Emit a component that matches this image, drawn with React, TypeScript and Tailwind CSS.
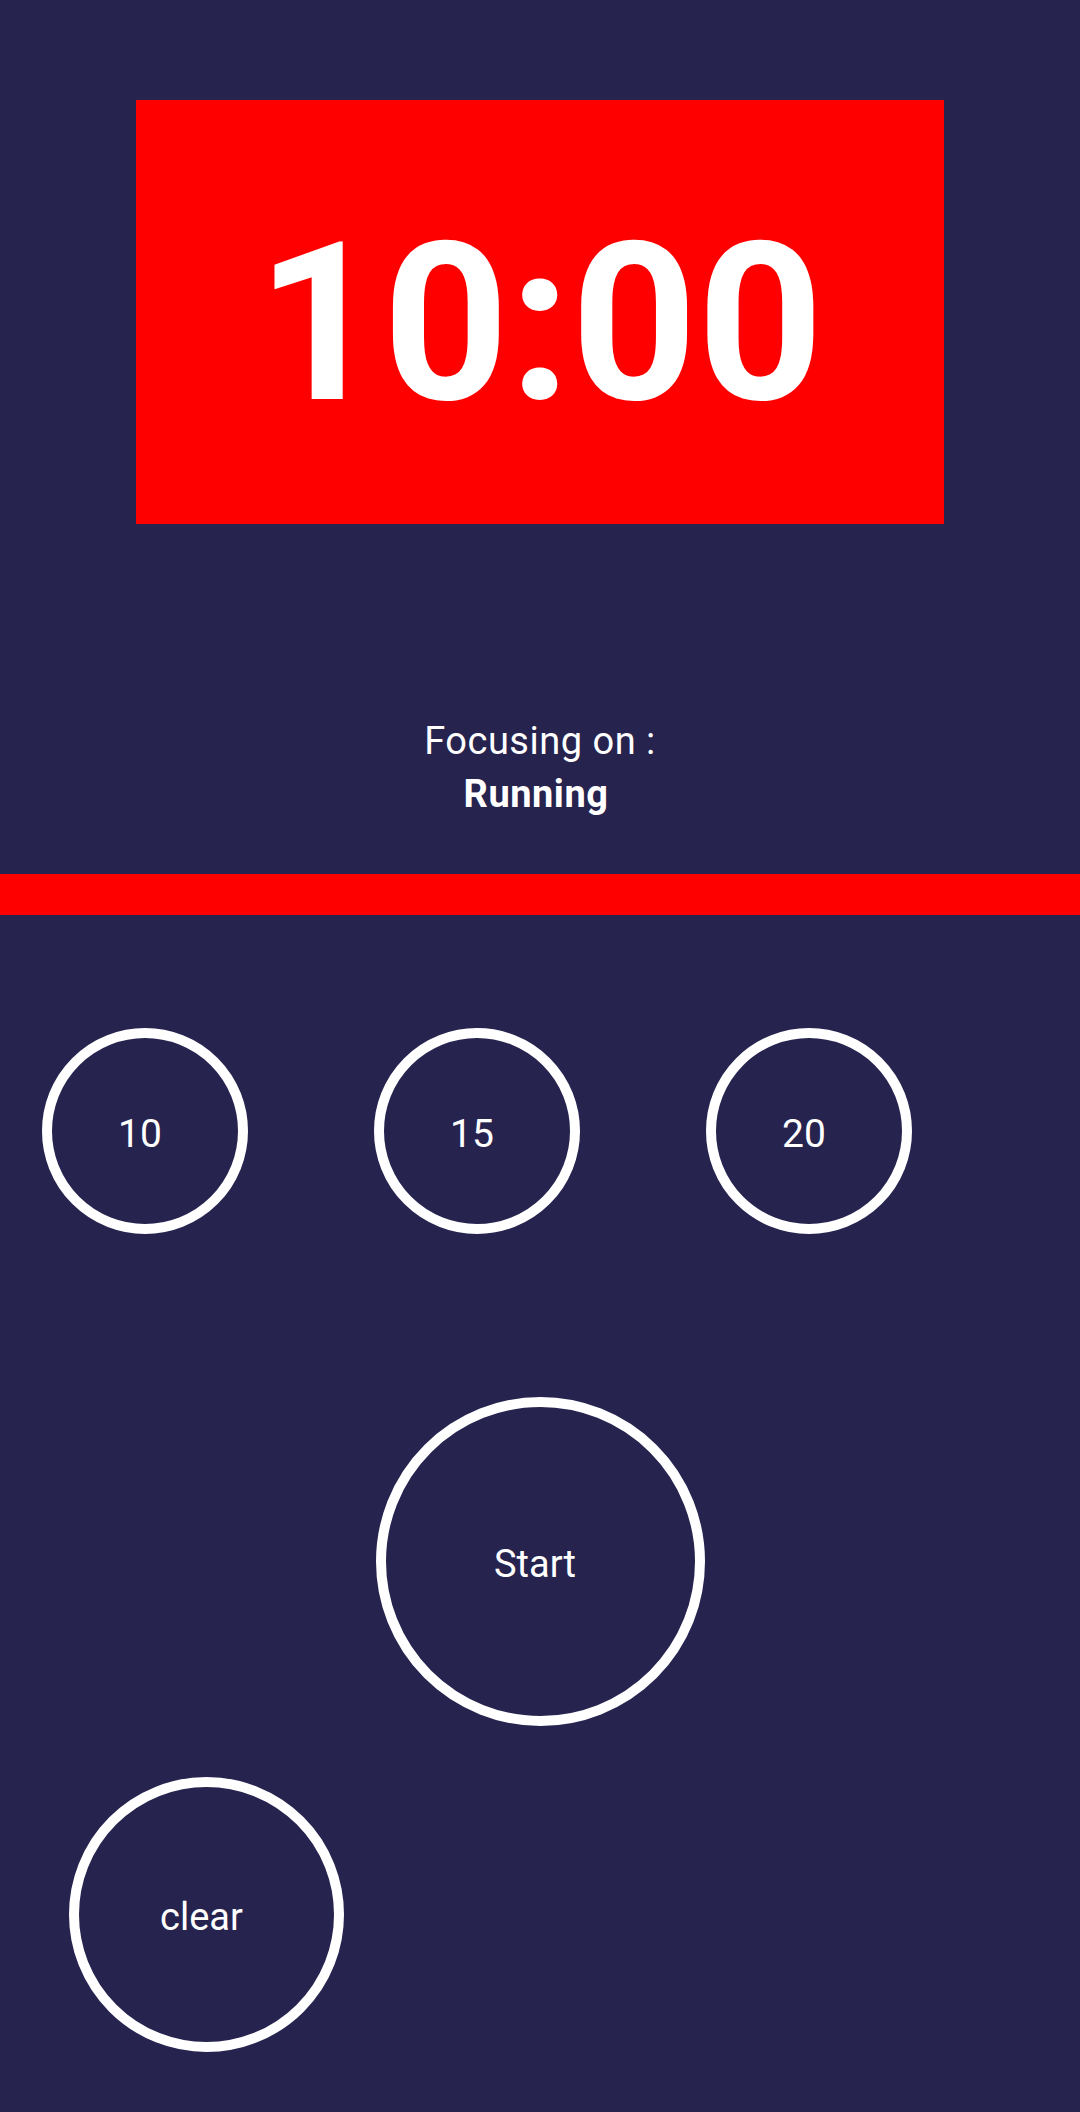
import { useState } from "react";

const presets = [10, 15, 20];

export default function App() {
  const [minutes, setMinutes] = useState(10);

  const timeLabel = `${minutes}:00`;

  return (
    <div className="min-h-[2112px] w-[1080px] bg-[#26234f] font-['Roboto',sans-serif] text-white flex flex-col">
      {/* Timer display */}
      <div className="mt-[100px] mx-[136px] h-[424px] bg-[#ff0000] flex items-center justify-center pt-[24px]">
        <span className="text-[220px] leading-none font-bold">{timeLabel}</span>
      </div>

      {/* Current task */}
      <div className="mt-[191px] flex flex-col items-center text-[38px] leading-[53px] tracking-[0.5px]">
        <span>Focusing on :</span>
        <span className="font-bold -ml-[8px]">Running</span>
      </div>

      <div className="mt-[53px] h-[41px] bg-[#ff0000]" />

      {/* Preset durations */}
      <div className="mt-[113px] pl-[42px] flex gap-[126px]">
        {presets.map((p) => (
          <button
            key={p}
            onClick={() => setMinutes(p)}
            className="w-[206px] h-[206px] rounded-full border-[10px] border-white flex items-center justify-center pr-[10px] pt-[6px] text-[39px]"
          >
            {p}
          </button>
        ))}
      </div>

      {/* Start */}
      <div className="mt-[163px] flex justify-center">
        <button className="w-[329px] h-[329px] rounded-full border-[10px] border-white flex items-center justify-center pr-[10px] pt-[6px] text-[38px]">
          Start
        </button>
      </div>

      {/* Clear */}
      <div className="mt-[51px] pl-[69px] flex">
        <button
          onClick={() => setMinutes(10)}
          className="w-[275px] h-[275px] rounded-full border-[10px] border-white flex items-center justify-center pr-[10px] pt-[6px] text-[38px]"
        >
          clear
        </button>
      </div>
    </div>
  );
}
